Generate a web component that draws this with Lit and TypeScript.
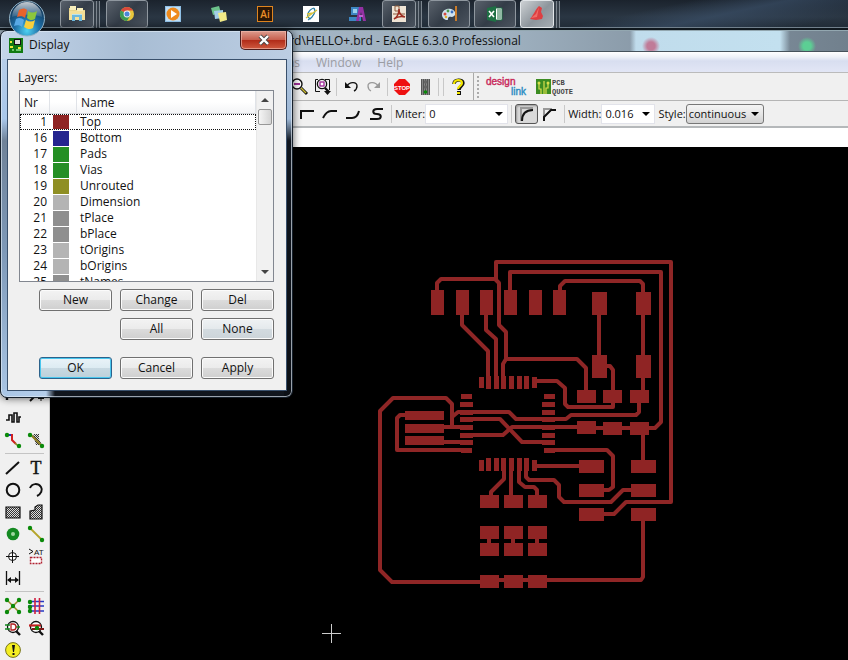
import { LitElement, html, svg, css, nothing, TemplateResult } from "lit";
import { customElement, property } from "lit/decorators.js";

type Glyph = TemplateResult;

const GREEN = "#0a8a0a";

const dots = (...p: number[][]) =>
  p.map(([x, y]) => svg`<circle cx=${x} cy=${y} r="2.2" fill=${GREEN}></circle>`);

/* ---------- taskbar icons, 18 x 18 ---------- */
const taskIcons: Record<string, Glyph> = {
  explorer: svg`<path d="M1 3h6l1 2h9v10H1z" fill="#e9d488"/><path d="M2 1h6v4H2zM9 3h6v3H9z" fill="#f7eebb"/><path d="M1 6h16v9H1z" fill="#f3df98"/><path d="M4 16V9h10v7h-3v-4H7v4z" fill="#6cb8dc"/><path d="M4 9h10v1H4z" fill="#b7e2f2"/>`,
  chrome: svg`<circle cx="9" cy="9" r="7" fill="#e8c63c"/><path d="M9 9L2.9 5.5A7 7 0 0 1 15.1 5.5H9z" fill="#d9483b"/><path d="M9 9L2.9 5.5A7 7 0 0 0 9 16l3-5z" fill="#3c9b55"/><circle cx="9" cy="9" r="3.4" fill="#f2f2f2"/><circle cx="9" cy="9" r="2.5" fill="#4a86d8"/>`,
  player: svg`<rect x="1" y="1" width="16" height="16" fill="#8fc0e6"/><rect x="2" y="2" width="14" height="14" fill="#c3def2"/><circle cx="9" cy="9" r="6.5" fill="#ee8a1d"/><path d="M7 5l6 4-6 4z" fill="#fff"/>`,
  notes: svg`<path d="M1 3l8-2 2 7-8 2z" fill="#6cc28b"/><path d="M4 6l9-1v8l-8 1z" fill="#a3cde8"/><path d="M8 8l8-1 1 8-7 2z" fill="#f2ea87"/>`,
  illustrator: svg`<rect x="1.5" y="1.5" width="15" height="15" fill="#2b1706" stroke="#e0851f"/><text x="9" y="13" text-anchor="middle" font-family="Open Sans" font-size="10" font-weight="600" fill="#ee8f28">Ai</text>`,
  sketch: svg`<rect x="1" y="1" width="16" height="16" fill="#fff"/><path d="M9 14C3 12 6 5 12 3M12 3c2 3 0 9-6 12" fill="none" stroke="#2a7fa5" stroke-width="1.3"/><path d="M4 13L15 5M5 9l6-1" stroke="#d8c23a" stroke-width="1.4"/>`,
  design: svg`<path d="M3 2h8v8H3zM1 12h12v4H1z" fill="#3d86c2"/><path d="M5 4h4v4H5z" fill="#9bd0ee"/><path d="M8 16l3-14h4l3 14h-3l-2-9-2 9z" fill="#9430a3"/><path d="M11 10h4v2h-4z" fill="#c05fd0"/>`,
  acrobat: svg`<rect x="2" y="1" width="14" height="16" fill="#efe4d5"/><path d="M5 1h4v5H5zM3 9h12" fill="none" stroke="#8b5a3c"/><path d="M4 14C9 11 9 7 9 4c0 5 2 7 6 8-4-1-8 0-11 2z" fill="none" stroke="#9c2d20" stroke-width="1.5"/>`,
  paint: svg`<path d="M2 10c0-5 5-7 9-6s6 5 3 7-3 0-5 1 0 3-2 3-5-2-5-5z" fill="#cfe2ef"/><circle cx="5" cy="9" r="1.5" fill="#d34b3f"/><circle cx="8" cy="6" r="1.4" fill="#4a9b4c"/><circle cx="12" cy="7" r="1.4" fill="#3c6fc0"/><circle cx="6" cy="12" r="1.3" fill="#e4b12e"/><path d="M15 1h2v15h-2z" fill="#c97b2a"/>`,
  excel: svg`<path d="M9 3h7v12H9z" fill="#fff" stroke="#1e7044"/><path d="M11 5h4M11 7h4M11 9h4M11 11h4M11 13h4" stroke="#1e7044"/><path d="M1 3l9-2v16l-9-2z" fill="#1e7044"/><path d="M3 6l5 6M8 6l-5 6" stroke="#fff" stroke-width="1.6"/>`,
  eagle: svg`<path d="M2 14C5 11 7 5 11 1l3 2-1 4 2 4-1 3-6 1z" fill="#dd3f42"/><path d="M11 2L8 9l-5 4 6-1z" fill="#f06c68"/>`,
};

/* ---------- tool bar icons, 18 x 20 ---------- */
const barIcons: Record<string, Glyph> = {
  zoomOut: svg`<circle cx="6" cy="7" r="5" fill="#fff" stroke="#111" stroke-width="1.4"/><path d="M3 7h6" stroke="#a0309a" stroke-width="2"/><path d="M10 11l6 6" stroke="#111" stroke-width="3"/><path d="M10 11l5 5" stroke="#cbbb30" stroke-width="1.4"/>`,
  zoomSelect: svg`<path d="M6 14.500H1.500V2.500H4M11 2.500h4.500V13" fill="none" stroke="#111"/><circle cx="8" cy="7" r="4.600" fill="#fff" stroke="#111" stroke-width="1.400"/><rect x="6" y="5" width="4" height="4" fill="none" stroke="#a0309a" stroke-width="1.400"/><path d="M11 11l4 4" stroke="#111" stroke-width="2.400"/><path d="M10 14h7l-3.500 4z" fill="#111"/>`,
  undo: svg`<path d="M5 9c3-5 10-4 10 0 0 2-1 4-3 5" fill="none" stroke="#111" stroke-width="1.400"/><path d="M3 5l6 6H3z" fill="#111"/>`,
  redo: svg`<path d="M13 9c-3-5-10-4-10 0 0 2 1 4 3 5" fill="none" stroke="#999" stroke-width="1.300"/><path d="M15 5l-6 6h6z" fill="#999"/>`,
  stop: svg`<path d="M6 2h6l5 5v6l-5 5H6l-5-5V7z" fill="#ee1111"/><text x="9" y="13" text-anchor="middle" font-family="Liberation Sans" font-size="6" font-weight="700" fill="#fff">STOP</text>`,
  traffic: svg`<rect x="5" y="2" width="9" height="16" fill="#888"/><path d="M5 3h9M5 5h9M5 7h9M5 9h9M5 11h9M5 13h9M5 15h9M5 17h9" stroke="#222" stroke-dasharray="1 1"/><circle cx="9.500" cy="5" r="1.800" fill="#666"/><circle cx="9.500" cy="10" r="1.800" fill="#666"/><circle cx="9.500" cy="15" r="1.800" fill="#0a8a0a"/>`,
  help: svg`<path d="M5 7c0-5 9-5 9-1 0 3-4 3-4 7" fill="none" stroke="#111" stroke-width="3.400"/><path d="M8 14h4v4H8z" fill="#111"/><path d="M5 7c0-5 8-5 8-1 0 3-4 3-4 6" fill="none" stroke="#f3e600" stroke-width="2.200"/><path d="M8 15h3v2H8z" fill="#f3e600"/>`,
};

const bends: Record<string, string> = {
  corner: "M2 14V6H15",
  arcUp: "M1 13c2-4 5-7 8-7h6",
  arcDown: "M1 13h6c4 0 6-3 7-7",
  ess: "M15 4H9c-5 0-5 5 0 5s5 5 0 5H2",
};

/* ---------- palette icons, 18 x 18 ---------- */
const lattice = (d: string) => svg`<path d=${d} fill="url(#mesh)" stroke="#111" stroke-width="1.2"/>`;
const mesh = svg`<defs><pattern id="mesh" width="2" height="2" patternUnits="userSpaceOnUse"><rect width="2" height="2" fill="#ddd"/><path d="M0 0h1v1H0zM1 1h1v1H1z" fill="#333"/></pattern></defs>`;

const toolIcons: Record<string, Glyph> = {
  miter: svg`<path d="M3 13V8l5-5h6" fill="none" stroke="#111" stroke-width="2.400"/>`,
  split: svg`<path d="M3 14L13 4" stroke="#111" stroke-width="2"/><path d="M11 11.500h6M14 9v5" stroke="#111"/>`,
  meander: svg`<path d="M2 11h3V6h3v7h2V4h3v9h2V8h2" fill="none" stroke="#111" stroke-width="1.600"/>`,
  route: svg`<path d="M2 4h6" stroke="#2436c0" stroke-width="2"/><path d="M8 3v6l4 4" fill="none" stroke="#d02020" stroke-width="2"/><path d="M11 12l4 4" stroke="#8a8a20" stroke-width="1.500"/>${dots([3, 4], [15, 15])}`,
  ripup: svg`<path d="M6 3h6v5l3 6H9z" fill="url(#mesh)"/><path d="M3 3l12 12" stroke="#8a7a20" stroke-width="2"/>${dots([3, 4], [15, 15])}`,
  wire: svg`<path d="M2 15L15 3" stroke="#111" stroke-width="2"/>`,
  text: svg`<text x="9" y="15" text-anchor="middle" font-family="Liberation Serif" font-size="18" fill="#111" stroke="#111" stroke-width=".4">T</text>`,
  circle: svg`<circle cx="9" cy="9" r="6.300" fill="none" stroke="#111" stroke-width="2"/>`,
  arc: svg`<path d="M3 7c2-5 8-5 11-1 2 3 0 7-4 9" fill="none" stroke="#111" stroke-width="2"/>`,
  rect: lattice("M2 4h14v11H2z"),
  polygon: lattice("M3 8l5-1V4l3-2h4v14H3z"),
  via: svg`<circle cx="9" cy="9" r="6.300" fill="#158a22"/><circle cx="9" cy="9" r="2" fill="#9fd79f"/>`,
  signal: svg`<path d="M3 3l12 12" stroke="#b5a52c" stroke-width="1.800"/>${dots([3, 3], [15, 15])}`,
  hole: svg`<circle cx="8.500" cy="9.500" r="4" fill="#fff" stroke="#111"/><path d="M8.500 3v13M2 9.500h13" stroke="#111"/>`,
  attribute: svg`<path d="M2 2l4 2.500-4 2.500" fill="none" stroke="#111"/><text x="7" y="8" font-family="Liberation Sans" font-size="8" fill="#111">AT</text><rect x="3.500" y="10.500" width="11" height="6" fill="#fff" stroke="#b02030" stroke-width="1.400" stroke-dasharray="2 1"/>`,
  dimension: svg`<path d="M2.500 2v14M15.500 2v14M4 11h10" stroke="#111" stroke-width="1.300"/><path d="M3 11l4-3v6zM15 11l-4-3v6z" fill="#111"/>`,
  ratsnest: svg`<path d="M3 3l12 12M15 3L3 15" stroke="#9a8a2c" stroke-width="1.500"/>${dots([3, 3], [15, 3], [9, 9], [3, 15], [15, 15])}`,
  auto: svg`<path d="M1 4.500h16M1 9h16M1 14h16" stroke="#2638c4" stroke-width="1.700"/><path d="M8 1v16M12.500 1v16" stroke="#d02040" stroke-width="1.600"/>${dots([3, 5], [3, 10], [3, 14])}`,
  erc: svg`<circle cx="9" cy="8" r="5.500" fill="#fff" stroke="#111" stroke-width="1.300"/><path d="M1 6h5M1 10h5M12 8h4" stroke="#158a22" stroke-width="1.300"/><path d="M7 5h2c4 0 4 6 0 6H7z" fill="none" stroke="#b02020" stroke-width="1.300"/><path d="M12 12l4 4" stroke="#111" stroke-width="2.400"/>`,
  drc: svg`<circle cx="9" cy="8" r="5.500" fill="#fff" stroke="#111" stroke-width="1.300"/><path d="M2 6.500h12" stroke="#c02020" stroke-width="2.200"/><path d="M5 10h12" stroke="#801818" stroke-width="2"/><path d="M12 12l4 4" stroke="#111" stroke-width="2.400"/>${dots([10, 9])}`,
  errors: svg`<circle cx="9" cy="9" r="7.400" fill="#f4ee22" stroke="#77741a"/><path d="M8 4h3l-1 7H9zM8.500 12h2v2h-2z" fill="#111"/>`,
};

/* ---------- board geometry ---------- */
const padGroups: Array<{ w: number; h: number; at: number[][] }> = [
  { w: 13, h: 25, at: [[431, 290], [456, 290], [480, 290], [504, 290], [529, 290], [553, 290]] },
  { w: 15, h: 23, at: [[592, 292], [636, 292], [592, 355], [636, 355]] },
  { w: 19, h: 13, at: [
    [577, 390], [603, 390], [630, 390], [577, 421], [603, 422], [630, 422],
    [480, 495], [504, 495], [528, 495], [480, 526], [504, 526], [528, 526],
    [480, 543], [504, 543], [528, 543], [480, 575], [504, 575], [528, 575],
  ] },
  { w: 25, h: 13, at: [[579, 460], [631, 460], [579, 484], [631, 484], [579, 508], [631, 508]] },
  { w: 39, h: 9, at: [[405, 411], [405, 424], [405, 436]] },
  { w: 11, h: 5, at: [[461, 394], [461, 448], [544, 394], [544, 448]] },
  { w: 13, h: 5, at: [402, 410, 417, 425, 433, 440].flatMap((y) => [[460, y], [542, y]]) },
  { w: 5, h: 11, at: [[479, 377], [532, 377], [479, 460], [532, 460]] },
  { w: 5, h: 13, at: [486, 494, 501, 509, 517, 524].flatMap((x) => [[x, 376], [x, 458]]) },
];

const traces = [
  "M437 291V283L441 279H495L499 283V325L506 332V359L503 364V378",
  "M496 279V262H671V502H626L614 514H602",
  "M510 291V272H661V422L655 428H648",
  "M560 291V286L565 281H640L643 284V293",
  "M599 314V356M643 314V356M643 377V391M643 434V461",
  "M506 359H577L586 368V391",
  "M606 366H610L613 370V391",
  "M537 381H557L565 388V404L568 407H613V402",
  "M639 402V412L636 415H571L566 419H516L509 412H458L452 417",
  "M480 582H392L380 570V411L393 398H446L452 404V427",
  "M546 580H641L643 577V520",
  "M406 415H400L397 418V450H462",
  "M443 427H462M443 442H462",
  "M461 419H500L522 442H543",
  "M461 435H503L512 427H578",
  "M595 428H604M621 428H631",
  "M554 450H607L613 456V487L609 490H603",
  "M462 314V325L488 351V378",
  "M486 314V330L496 339V378",
  "M504 470V479L491 492V496M511 470V496",
  "M519 470V482L525 487H534L537 490V496",
  "M526 470V477L529 480H554L559 485V497L564 502H611L623 490H632",
  "M536 466H580",
  "M489 538V544M513 538V544M537 538V544M498 580H529",
];

const layers: Array<[number, string, string]> = [
  [1, "Top", "#8f2424"], [16, "Bottom", "#24248f"], [17, "Pads", "#248f24"],
  [18, "Vias", "#248f24"], [19, "Unrouted", "#8f8f24"], [20, "Dimension", "#b4b4b4"],
  [21, "tPlace", "#8f8f8f"], [22, "bPlace", "#8f8f8f"], [23, "tOrigins", "#b4b4b4"],
  [24, "bOrigins", "#b4b4b4"], [25, "tNames", "#8f8f8f"],
];

const base = css`
  *, *::before, *::after { box-sizing: border-box; }
  button { font: inherit; color: inherit; margin: 0; padding: 0; border: 0; background: none; }
  svg { display: block; flex: none; overflow: visible; }
`;

@customElement("task-bar")
class TaskBar extends LitElement {
  static styles = [base, css`
    :host {
      display: flex; height: 30px; padding-left: 58px;
      background:
        linear-gradient(168deg, transparent 40%, #3b5069aa 60%, transparent 88%) 500px 0 / 348px 29px no-repeat,
        linear-gradient(#1b232d, #2a3643 60%, #202b36);
      border-bottom: 2px solid #10181e;
      box-shadow: inset 0 -1px #71808c;
    }
    .slot { width: 46px; height: 28px; display: flex; align-items: center; justify-content: center; }
    .tile { width: 42px; height: 28px; display: flex; align-items: center; justify-content: center; }
    .open .tile {
      border: 1px solid #8f979f; border-radius: 3px;
      background: linear-gradient(135deg, #59616b, #333c47 50%, #4b545f);
    }
    .stacked .tile { width: 34px; }
    .stacked { justify-content: flex-start; padding-left: 2px; }
    .stack { width: 3px; height: 27px; border-right: 1px solid #7d868f; background: #353f49; }
    .active .tile { background: linear-gradient(135deg, #cdd1d4, #8d959c 55%, #a6adb3); border-color: #e2e6e9; }
  `];

  private slotFor(name: string, mode = "") {
    return html`<div class="slot ${mode}">
      <button class="tile" aria-label=${name}><svg width="18" height="18" viewBox="0 0 18 18">${taskIcons[name]}</svg></button>
      ${mode.includes("stacked") ? html`<span class="stack"></span><span class="stack"></span>` : nothing}
    </div>`;
  }

  render() {
    return [
      this.slotFor("explorer", "open stacked"), this.slotFor("chrome", "open"),
      this.slotFor("player"), this.slotFor("notes"), this.slotFor("illustrator"),
      this.slotFor("sketch"), this.slotFor("design"), this.slotFor("acrobat", "open stacked"),
      this.slotFor("paint", "open"), this.slotFor("excel", "open"), this.slotFor("eagle", "open active stacked"),
    ];
  }
}

@customElement("tool-bars")
class ToolBars extends LitElement {
  static styles = [base, css`
    :host { display: block; color: #111; font-size: 11px; }
    .row { display: flex; align-items: center; height: 28px; padding-left: 288px; background: #f0f0f0; border-bottom: 1px solid #b5b5b5; }
    .row.params { height: 27px; padding-left: 296px; border-bottom: 2px solid #b5b8ba; }
    .icon { display: flex; width: 23px; justify-content: center; }
    .sep { width: 1px; height: 18px; background: #c8c8c8; margin: 0 2px; }
    .params .sep { margin: 0 3px; }
    .edge { width: 1px; height: 27px; background: #aaa; margin-left: 4px; }
    .grip { width: 2px; height: 22px; margin: 0 7px 0 3px; background: repeating-linear-gradient(#aaa 0 2px, transparent 2px 4px); }
    .logo { margin-right: 8px; }
    .bend { width: 23px; height: 20px; display: flex; align-items: center; justify-content: center; }
    .bend.on { border: 1px solid #555; border-radius: 3px; background: #d9d9d9; box-shadow: inset 1px 1px 2px #999; }
    .field { display: flex; align-items: center; }
    .combo { position: relative; display: flex; }
    .combo::after {
      content: ""; position: absolute; right: 5px; top: 8px; pointer-events: none;
      border: 4px solid transparent; border-top-color: #000; border-bottom: 0;
    }
    select {
      appearance: none; height: 20px; margin: 0; padding: 0 3px; border: 1px solid #e2e3ea; border-radius: 0;
      background: #fff; color: #111; font: inherit; outline: 0;
    }
    .miter { width: 83px; }
    .width { width: 54px; }
    .style { width: 78px; padding: 0 2px; border: 1px solid #777; border-radius: 3px; background: linear-gradient(#f4f4f4, #e6e6e6 50%, #d2d2d2); }
    .style-field { margin-left: 3px; }
  `];

  private icon(name: string) {
    return html`<button class="icon" aria-label=${name}><svg width="18" height="20" viewBox="0 0 18 20">${barIcons[name]}</svg></button>`;
  }

  private bend(name: string) {
    return html`<button class="bend" aria-label=${name}><svg width="17" height="18" viewBox="0 0 17 18"><path d=${bends[name]} fill="none" stroke="#111" stroke-width="2"></path></svg></button>`;
  }

  render() {
    return html`
      <div class="row">
        ${this.icon("zoomOut")}${this.icon("zoomSelect")}<span class="sep"></span>
        ${this.icon("undo")}${this.icon("redo")}<span class="sep"></span>
        ${this.icon("stop")}${this.icon("traffic")}<span class="sep"></span><span class="sep"></span>
        ${this.icon("help")}<span class="edge"></span><span class="grip"></span>
        <a class="logo" href="#" aria-label="design link">
          <svg width="42" height="20" viewBox="0 0 42 20" font-family="Liberation Sans" font-size="10" stroke-width=".4">
            <text x="0" y="8" fill="#c8285a" stroke="#c8285a">design</text>
            <text x="25" y="18" fill="#2a8ec4" stroke="#2a8ec4">link</text>
          </svg>
        </a>
        <a class="logo" href="#" aria-label="PCB quote">
          <svg width="38" height="20" viewBox="0 0 38 20">
            <path d="M0 2h15v15H0z" fill="#3c8c22"/>
            <path d="M3 7v5h2v5M8 4v13M12 6v5h-2v6" fill="none" stroke="#d9e04c" stroke-width="1.2"/>
            <circle cx="3" cy="6" r="1.5" fill="#d9e04c"/><circle cx="12" cy="6" r="1.5" fill="#d9e04c"/>
            <g font-family="Liberation Mono" font-size="7" font-weight="700" fill="#444"><text x="16" y="8">PCB</text><text x="16" y="17">QUOTE</text></g>
          </svg>
        </a>
      </div>
      <div class="row params">
        ${this.bend("corner")}${this.bend("arcUp")}${this.bend("arcDown")}${this.bend("ess")}
        <span class="sep"></span>
        <label class="field">Miter:<span class="combo"><select class="miter"><option>0</option></select></span></label>
        <span class="sep"></span>
        <button class="bend on" aria-label="round miter"><svg width="17" height="18" viewBox="0 0 17 18"><path d="M3 16V3h12" fill="none" stroke="#999" stroke-width="2"/><path d="M4 16C4 9 8 5 15 5" fill="none" stroke="#111" stroke-width="2"/></svg></button>
        <button class="bend" aria-label="straight miter"><svg width="17" height="18" viewBox="0 0 17 18"><path d="M3 12V4h8" fill="none" stroke="#999" stroke-width="2"/><path d="M3 16v-4l7-7h5" fill="none" stroke="#111" stroke-width="2"/></svg></button>
        <span class="sep"></span>
        <label class="field">Width:<span class="combo"><select class="width"><option>0.016</option></select></span></label>
        <label class="field style-field">Style:<span class="combo"><select class="style"><option>continuous</option></select></span></label>
      </div>`;
  }
}

@customElement("tool-palette")
class ToolPalette extends LitElement {
  static styles = [base, css`
    :host { display: block; width: 50px; flex: none; padding-top: 238px; background: #f0f0f0; border-right: 1px solid #ccc; }
    .group { display: grid; grid-template-columns: 23px 23px; grid-auto-rows: 22px; padding-left: 1px; }
    .group + .group { margin-top: 6px; position: relative; }
    .group + .group::before { content: ""; position: absolute; left: 5px; right: 5px; top: -4px; height: 1px; background: #c4c4c4; }
    .tool { display: flex; align-items: center; justify-content: center; }
  `];

  render() {
    const groups = [
      ["miter", "split", "meander", "", "route", "ripup"],
      ["wire", "text", "circle", "arc", "rect", "polygon", "via", "signal", "hole", "attribute", "dimension"],
      ["ratsnest", "auto", "erc", "drc", "errors"],
    ];
    return groups.map((g) => html`<div class="group">${g.map((n) => n
      ? html`<button class="tool" aria-label=${n}><svg width="18" height="18" viewBox="0 0 18 18">${mesh}${toolIcons[n]}</svg></button>`
      : html`<span></span>`)}</div>`);
  }
}

@customElement("board-view")
class BoardView extends LitElement {
  static styles = [base, css`
    :host { display: block; flex: 1; min-width: 0; overflow: hidden; background: #000; }
  `];

  render() {
    return html`<svg width="798" height="513" viewBox="50 147 798 513" role="img" aria-label="Board layout">
      <g fill="none" stroke="#8f2626" stroke-width="4" stroke-linejoin="round">${traces.map((d) => svg`<path d=${d}></path>`)}</g>
      <g fill="#8f2424" shape-rendering="crispEdges">${padGroups.map(({ w, h, at }) =>
        at.map(([x, y]) => svg`<rect x=${x} y=${y} width=${w} height=${h}></rect>`))}</g>
      <path d="M322 633.5h19M331.5 624v19" stroke="#ccc"></path>
    </svg>`;
  }
}

@customElement("layer-dialog")
class LayerDialog extends LitElement {
  @property({ type: Number }) current = 1;

  static styles = [base, css`
    :host {
      display: block; width: 293px; padding: 0 5px 6px 6px; border: 1px solid #16202b; border-radius: 7px;
      background:
        linear-gradient(90deg, #a9c5e4, #b4cdea 50%, transparent 60%) 0 100% / 90px 8px no-repeat,
        linear-gradient(90deg, #c4d5e9, #a8bdd4 45%, #bccee3) 0 0 / 100% 28px no-repeat,
        linear-gradient(#bdd0e6, #9db7d5 24%, #10161f 30%, #0c1016) 100% 0 / 8px 100% no-repeat,
        linear-gradient(#bdd0e6, #a9c7ea 24%, #6f8298 30%, #7e99b8 60%, #a9c5e4) 0 0 / 8px 100% no-repeat,
        #11161e;
      box-shadow: inset 0 0 0 1px #dfeaf5aa, 0 0 8px #000a; color: #111;
    }
    .title { display: flex; height: 28px; align-items: flex-start; }
    .chip { margin: 7px 6px 0 2px; }
    h2 { flex: 1; margin: 5px 0 0; font-size: 12px; font-weight: 400; line-height: 18px; }
    .close {
      width: 47px; height: 19px; display: flex; align-items: center; justify-content: center; border: 1px solid #4c1d1d; border-top: 0; border-radius: 0 0 5px 5px;
      background: linear-gradient(#dd9c8e, #c8604f 48%, #b02a17 50%, #cf5a40); box-shadow: inset 0 0 0 1px #f0b9adaa;
    }
    .client { height: 332px; padding: 9px 12px 0 11px; border: 1px solid #39506c; background: #f0f0f0; }
    .caption { margin-left: -1px; line-height: 18px; }
    .list { display: flex; height: 192px; margin-top: 3px; border: 1px solid #828790; background: #fff; overflow: hidden; }
    table { flex: 1; table-layout: fixed; border-collapse: separate; border-spacing: 0; height: max-content; }
    th { height: 23px; padding: 0 4px; text-align: left; font-weight: 400; border-right: 1px solid #e0e3e8; border-bottom: 1px solid #d8dade; background: linear-gradient(#fff 50%, #f3f4f6); }
    td { height: 16px; padding: 0; line-height: 16px; border: 1px none #111; }
    .nr { width: 30px; }
    .hue { width: 27px; }
    td.num { text-align: right; padding-right: 3px; }
    td.name { padding-left: 3px; }
    .current td { border-top-style: dotted; border-bottom-style: dotted; line-height: 14px; }
    .current td:first-child { border-left-style: dotted; }
    .current td:last-child { border-right-style: dotted; }
    .swatch { display: block; width: 16px; height: 15px; margin-left: 3px; }
    .current .swatch { height: 14px; }
    .scroll { width: 17px; display: flex; flex-direction: column; align-items: center; background: #f1f1f1; border-left: 1px solid #e8e8e8; }
    .up, .down { width: 16px; height: 18px; display: flex; align-items: center; justify-content: center; }
    .thumb { width: 14px; height: 16px; border: 1px solid #979797; border-radius: 2px; background: linear-gradient(90deg, #f5f5f5, #d4d4d4); }
    .down { margin-top: auto; }
    .grid { display: grid; grid-template-columns: repeat(3, 73px); justify-content: end; column-gap: 8px; row-gap: 7px; margin-top: 7px; }
    .push { height: 22px; line-height: 18px; border: 1px solid #707070; border-radius: 3px; background: linear-gradient(#f3f3f3, #ebebeb 50%, #dcdcdc 50%, #cfcfcf); box-shadow: inset 0 0 0 1px #fbfbfb; }
    .push.ok { border-color: #2c628b; background: linear-gradient(#eaf3f8, #dcebf2 50%, #c8d9e2 50%, #bdd0da); box-shadow: inset 0 0 0 1px #48c6ee; }
    .push.hot { background: linear-gradient(#eff2f4, #e4e9ec 50%, #d3dbe0 50%, #ccd4d9); }
    .gap { grid-column: 2; }
    .finish { margin-top: 17px; }
  `];

  render() {
    return html`
      <div class="title">
        <svg class="chip" width="14" height="15" viewBox="0 0 14 15"><path d="M0 0h14v15H0z" fill="#117a11"/><path d="M5 1h7v6H5z" fill="#111"/><path d="M6 2h5v4H6z" fill="#ddd"/><path d="M1 3h2v2H1zM1 8h3v2H1zM9 9h3v2H9z" fill="#eee83a"/><path d="M3 12h2M7 12h5" stroke="#8fe08f" stroke-width="1.5"/></svg>
        <h2>Display</h2>
        <button class="close" aria-label="Close"><svg width="14" height="12" viewBox="0 0 14 12"><path d="M3 2l8 8M11 2l-8 8" stroke="#444" stroke-width="4"/><path d="M3 2l8 8M11 2l-8 8" stroke="#fff" stroke-width="2.4"/></svg></button>
      </div>
      <div class="client">
        <div class="caption">Layers:</div>
        <div class="list">
          <table>
            <thead><tr><th class="nr">Nr</th><th class="hue"></th><th>Name</th></tr></thead>
            <tbody>${layers.map(([nr, name, hue]) => html`<tr class=${nr === this.current ? "current" : ""}>
              <td class="num">${nr}</td>
              <td><span class="swatch" style="background:${hue}"></span></td>
              <td class="name">${name}</td>
            </tr>`)}</tbody>
          </table>
          <div class="scroll">
            <button class="up" aria-label="Scroll up"><svg width="8" height="4" viewBox="0 0 8 4"><path d="M0 4l4-4 4 4z" fill="#444"/></svg></button>
            <span class="thumb"></span>
            <button class="down" aria-label="Scroll down"><svg width="8" height="4" viewBox="0 0 8 4"><path d="M0 0l4 4 4-4z" fill="#444"/></svg></button>
          </div>
        </div>
        <div class="grid">
          <button class="push">New</button><button class="push">Change</button><button class="push">Del</button>
          <button class="push gap">All</button><button class="push hot">None</button>
        </div>
        <div class="grid finish">
          <button class="push ok">OK</button><button class="push">Cancel</button><button class="push">Apply</button>
        </div>
      </div>`;
  }
}

@customElement("app-root")
class AppRoot extends LitElement {
  static styles = [base, css`
    :host {
      position: relative; display: flex; flex-direction: column; min-height: 100vh; overflow: hidden;
      font: 12px "Open Sans", "Noto Sans", sans-serif; background: #000;
    }
    .orb { position: absolute; left: 8px; top: 0; z-index: 3; }
    .caption {
      display: flex; align-items: center; height: 22px; padding-left: 282px; border-bottom: 1px solid #46525b; color: #111; white-space: pre;
      background:
        radial-gradient(circle, #c07b98 4px, transparent 9px) 641px 6px / 20px 20px no-repeat,
        radial-gradient(circle, #5ccf94 4px, transparent 9px) 797px 6px / 20px 20px no-repeat,
        linear-gradient(90deg, transparent, #c0dcec 6px, #c3e0ef 150px, transparent) 630px 0 / 160px 22px no-repeat,
        linear-gradient(90deg, #a9bac9, #9eb0bf 60%, #8494a2 80%, #71808d);
      box-shadow: inset 0 1px #93a7b0;
    }
    .menu { display: flex; align-items: center; height: 21px; font-size: 12px; color: #9b9da3; background: linear-gradient(#fff, #eef1f8 25%, #d8def0 45%, #e2e6f5); border-bottom: 1px solid #bbb; }
    .item { margin-right: 16px; }
    .item:first-child { width: 300px; text-align: right; }
    .command { height: 19px; border: 0; padding: 0 4px; width: 100%; background: #fff; outline: 0; }
    .work { flex: 1; display: flex; }
    .dialog { position: absolute; left: 0; top: 30px; z-index: 2; }
  `];

  render() {
    return html`
      <task-bar></task-bar>
      <button class="orb" aria-label="Start">
        <svg width="38" height="38" viewBox="0 0 38 38">
          <defs>
            <radialGradient id="ball" cx="50%" cy="85%" r="80%"><stop offset="0" stop-color="#4fd2f2"/><stop offset=".45" stop-color="#1d6ea6"/><stop offset="1" stop-color="#12304e"/></radialGradient>
            <linearGradient id="gloss" x2="0" y2="1"><stop offset="0" stop-color="#fff" stop-opacity=".75"/><stop offset="1" stop-color="#fff" stop-opacity=".1"/></linearGradient>
          </defs>
          <circle cx="19" cy="18.500" r="17.500" fill="url(#ball)" stroke="#93b4c8"/>
          <path d="M4 17a15 15 0 0 1 30 0c-8-3-22-3-30 0z" fill="url(#gloss)"/>
          <path d="M11 10c3-2 6-2 8 0l-2 8c-2-2-5-2-8-1z" fill="#e8632c"/>
          <path d="M20 11c3 2 6 2 9 0l-2 8c-3 2-6 1-8-1z" fill="#8cc63c"/>
          <path d="M8 19c3-2 6-1 8 1l-2 7c-2-2-5-2-8-1z" fill="#58a9e6"/>
          <path d="M18 20c3 2 6 2 9 0l-2 8c-3 2-6 1-9-1z" fill="#f8cf3c"/>
        </svg>
      </button>
      <div class="caption">ord\\HELLO+.brd - EAGLE 6.3.0 Professional</div>
      <nav class="menu"><button class="item">Options</button><button class="item">Window</button><button class="item">Help</button></nav>
      <tool-bars></tool-bars>
      <input class="command" aria-label="Command line">
      <div class="work"><tool-palette></tool-palette><board-view></board-view></div>
      <layer-dialog class="dialog"></layer-dialog>`;
  }
}
